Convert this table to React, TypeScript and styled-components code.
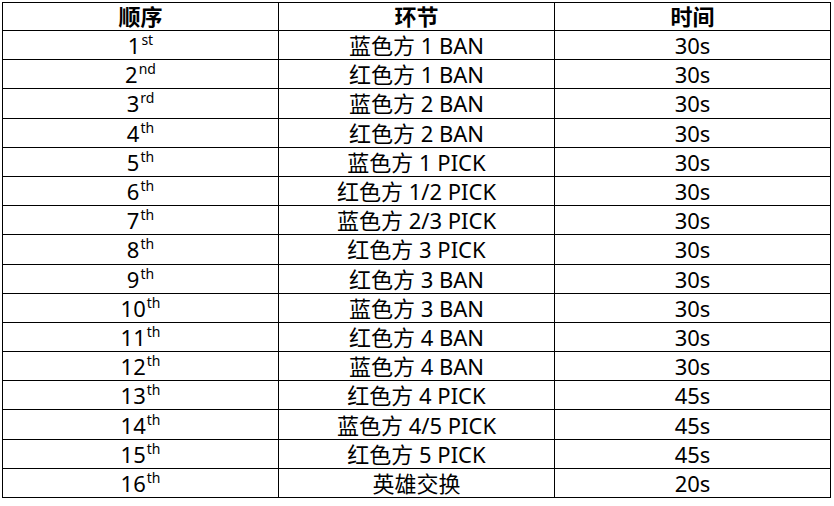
import React from "react";
import styled, { createGlobalStyle } from "styled-components";

const Global = createGlobalStyle`
  html, body { margin: 0; padding: 0; background: #fff; }
  body { font-family: "Noto Sans", "Noto Sans CJK SC", sans-serif; color: #000; }
`;

const Page = styled.div`
  padding: 2px 0 0 2px;
`;

const Table = styled.table`
  border-collapse: collapse;
  width: 829px;
  table-layout: fixed;
`;

const HeadCell = styled.th`
  border: 1px solid #000;
  height: 27px;
  padding: 0;
  font-size: 22px;
  font-weight: 700;
  line-height: 27px;
  text-align: center;
`;

const Cell = styled.td`
  border: 1px solid #000;
  height: 28.2px;
  padding: 0;
  font-size: 22px;
  line-height: 28px;
  text-align: center;
  white-space: nowrap;
`;

const Sup = styled.sup`
  font-size: 14px;
  line-height: 0;
  vertical-align: 9px;
  margin-left: 1px;
`;

const rows: [number, string, string, string][] = [
  [1, "st", "蓝色方 1 BAN", "30s"],
  [2, "nd", "红色方 1 BAN", "30s"],
  [3, "rd", "蓝色方 2 BAN", "30s"],
  [4, "th", "红色方 2 BAN", "30s"],
  [5, "th", "蓝色方 1 PICK", "30s"],
  [6, "th", "红色方 1/2 PICK", "30s"],
  [7, "th", "蓝色方 2/3 PICK", "30s"],
  [8, "th", "红色方 3 PICK", "30s"],
  [9, "th", "红色方 3 BAN", "30s"],
  [10, "th", "蓝色方 3 BAN", "30s"],
  [11, "th", "红色方 4 BAN", "30s"],
  [12, "th", "蓝色方 4 BAN", "30s"],
  [13, "th", "红色方 4 PICK", "45s"],
  [14, "th", "蓝色方 4/5 PICK", "45s"],
  [15, "th", "红色方 5 PICK", "45s"],
  [16, "th", "英雄交换", "20s"],
];

export default function App() {
  return (
    <Page>
      <Global />
      <Table>
        <thead>
          <tr>
            <HeadCell>顺序</HeadCell>
            <HeadCell>环节</HeadCell>
            <HeadCell>时间</HeadCell>
          </tr>
        </thead>
        <tbody>
          {rows.map(([n, suf, stage, time]) => (
            <tr key={n}>
              <Cell>
                {n}
                <Sup>{suf}</Sup>
              </Cell>
              <Cell>{stage}</Cell>
              <Cell>{time}</Cell>
            </tr>
          ))}
        </tbody>
      </Table>
    </Page>
  );
}
